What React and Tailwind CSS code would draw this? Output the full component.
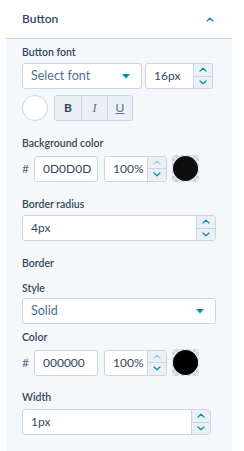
import { useState } from "react";

const label = "block h-4 text-[10.5px] leading-4 font-semibold text-[#33475b]";
const box = "h-[26px] bg-white border border-[#cbd6e2] rounded-[3px]";

function Chevron({ up, className }) {
  return (
    <svg width="8" height="5" viewBox="0 0 8 5" className={className}>
      <path
        d={up ? "M1 4L4 1.2L7 4" : "M1 1L4 3.8L7 1"}
        fill="none"
        stroke="currentColor"
        strokeWidth="1.2"
        strokeLinecap="round"
        strokeLinejoin="round"
      />
    </svg>
  );
}

function Caret() {
  return (
    <svg width="8" height="5" viewBox="0 0 8 5" className="text-[#0091ae]">
      <path d="M0 0H8L4 4.5Z" fill="currentColor" />
    </svg>
  );
}

function Stepper({ upOff }) {
  return (
    <div className="w-[19px] shrink-0 h-full flex flex-col bg-[#eaf0f6] border-l border-[#cbd6e2]">
      <div className="flex-1 flex items-center justify-center border-b border-[#cbd6e2]">
        <Chevron up className={upOff ? "text-[#b0c1d4]" : "text-[#0091ae]"} />
      </div>
      <div className="flex-1 flex items-center justify-center">
        <Chevron className="text-[#0091ae]" />
      </div>
    </div>
  );
}

function NumberInput({ value, className, upOff }) {
  return (
    <div className={`${box} shrink-0 flex overflow-hidden ${className}`}>
      <span className="flex-1 flex items-center pl-2 text-[12px] text-[#33475b]">{value}</span>
      <Stepper upOff={upOff} />
    </div>
  );
}

function Select({ value, className }) {
  return (
    <div className={`${box} shrink-0 flex items-center justify-between pl-2 pr-[11px] ${className}`}>
      <span className="text-[12.5px] text-[#516f90]">{value}</span>
      <Caret />
    </div>
  );
}

function Swatch({ color }) {
  return (
    <div className="w-[27px] h-[27px] shrink-0 flex items-center justify-center bg-[conic-gradient(#cbd6e2_25%,#e5ebf1_0_50%,#cbd6e2_0_75%,#e5ebf1_0)] bg-[length:6px_6px]">
      <div className={`w-[25px] h-[25px] rounded-full ${color}`} />
    </div>
  );
}

function ColorRow({ hex, swatch }) {
  return (
    <div className="flex items-center">
      <span className="w-2 shrink-0 text-[12px] text-[#516f90]">#</span>
      <span className={`${box} shrink-0 ml-1 w-[64px] flex items-center pl-2 text-[12px] text-[#33475b]`}>{hex}</span>
      <NumberInput value="100%" upOff className="ml-[6px] w-[63px]" />
      <div className="ml-[5px]">
        <Swatch color={swatch} />
      </div>
    </div>
  );
}

export default function App() {
  const [open, setOpen] = useState(true);

  return (
    <div className="w-[244px] h-[451px] bg-white font-['Lato',sans-serif]">
      <div className="ml-[6px] w-[226px] border-b border-[#cbd6e2]">
        <button
          type="button"
          onClick={() => setOpen(!open)}
          className="w-full h-[39px] flex items-center justify-between pl-4 pr-[18px] bg-white border-b border-[#cbd6e2]"
        >
          <span className="text-[12px] font-semibold text-[#33475b]">Button</span>
          <Chevron up={open} className="text-[#0091ae]" />
        </button>

        {open && (
          <div className="bg-[#f5f8fa] px-4 pt-[5px] pb-4">
            <span className={label}>Button font</span>
            <div className="mt-[3px] flex">
              <Select value="Select font" className="w-[120px]" />
              <NumberInput value="16px" className="ml-[3px] w-[68px]" />
            </div>

            <div className="mt-[6px] flex items-center">
              <div className="w-[26px] h-[26px] rounded-full bg-white border border-[#cbd6e2]" />
              <div className="ml-[6px] h-[26px] flex bg-[#eaf0f6] border border-[#cbd6e2] rounded-[3px] text-[#516f90] text-[12px]">
                <span className="w-[26px] flex items-center justify-center font-bold text-[#33475b]">B</span>
                <span className="w-[26px] flex items-center justify-center italic border-l border-[#cbd6e2] font-['Liberation_Serif',serif]">I</span>
                <span className="w-[25px] flex items-center justify-center underline border-l border-[#cbd6e2]">U</span>
              </div>
            </div>

            <span className={`${label} mt-[14px]`}>Background color</span>
            <div className="mt-1">
              <ColorRow hex="0D0D0D" swatch="bg-[#0d0d0d]" />
            </div>

            <span className={`${label} mt-[14px]`}>Border radius</span>
            <NumberInput value="4px" className="mt-[3px] w-[194px]" />

            <span className={`${label} mt-[14px]`}>Border</span>
            <span className={`${label} mt-[9px]`}>Style</span>
            <Select value="Solid" className="mt-[2px] w-[194px]" />

            <span className={`${label} mt-[5px]`}>Color</span>
            <div className="mt-1">
              <ColorRow hex="000000" swatch="bg-black" />
            </div>

            <span className={`${label} mt-[13px]`}>Width</span>
            <NumberInput value="1px" className="mt-1 w-[189px]" />
          </div>
        )}
      </div>
    </div>
  );
}
